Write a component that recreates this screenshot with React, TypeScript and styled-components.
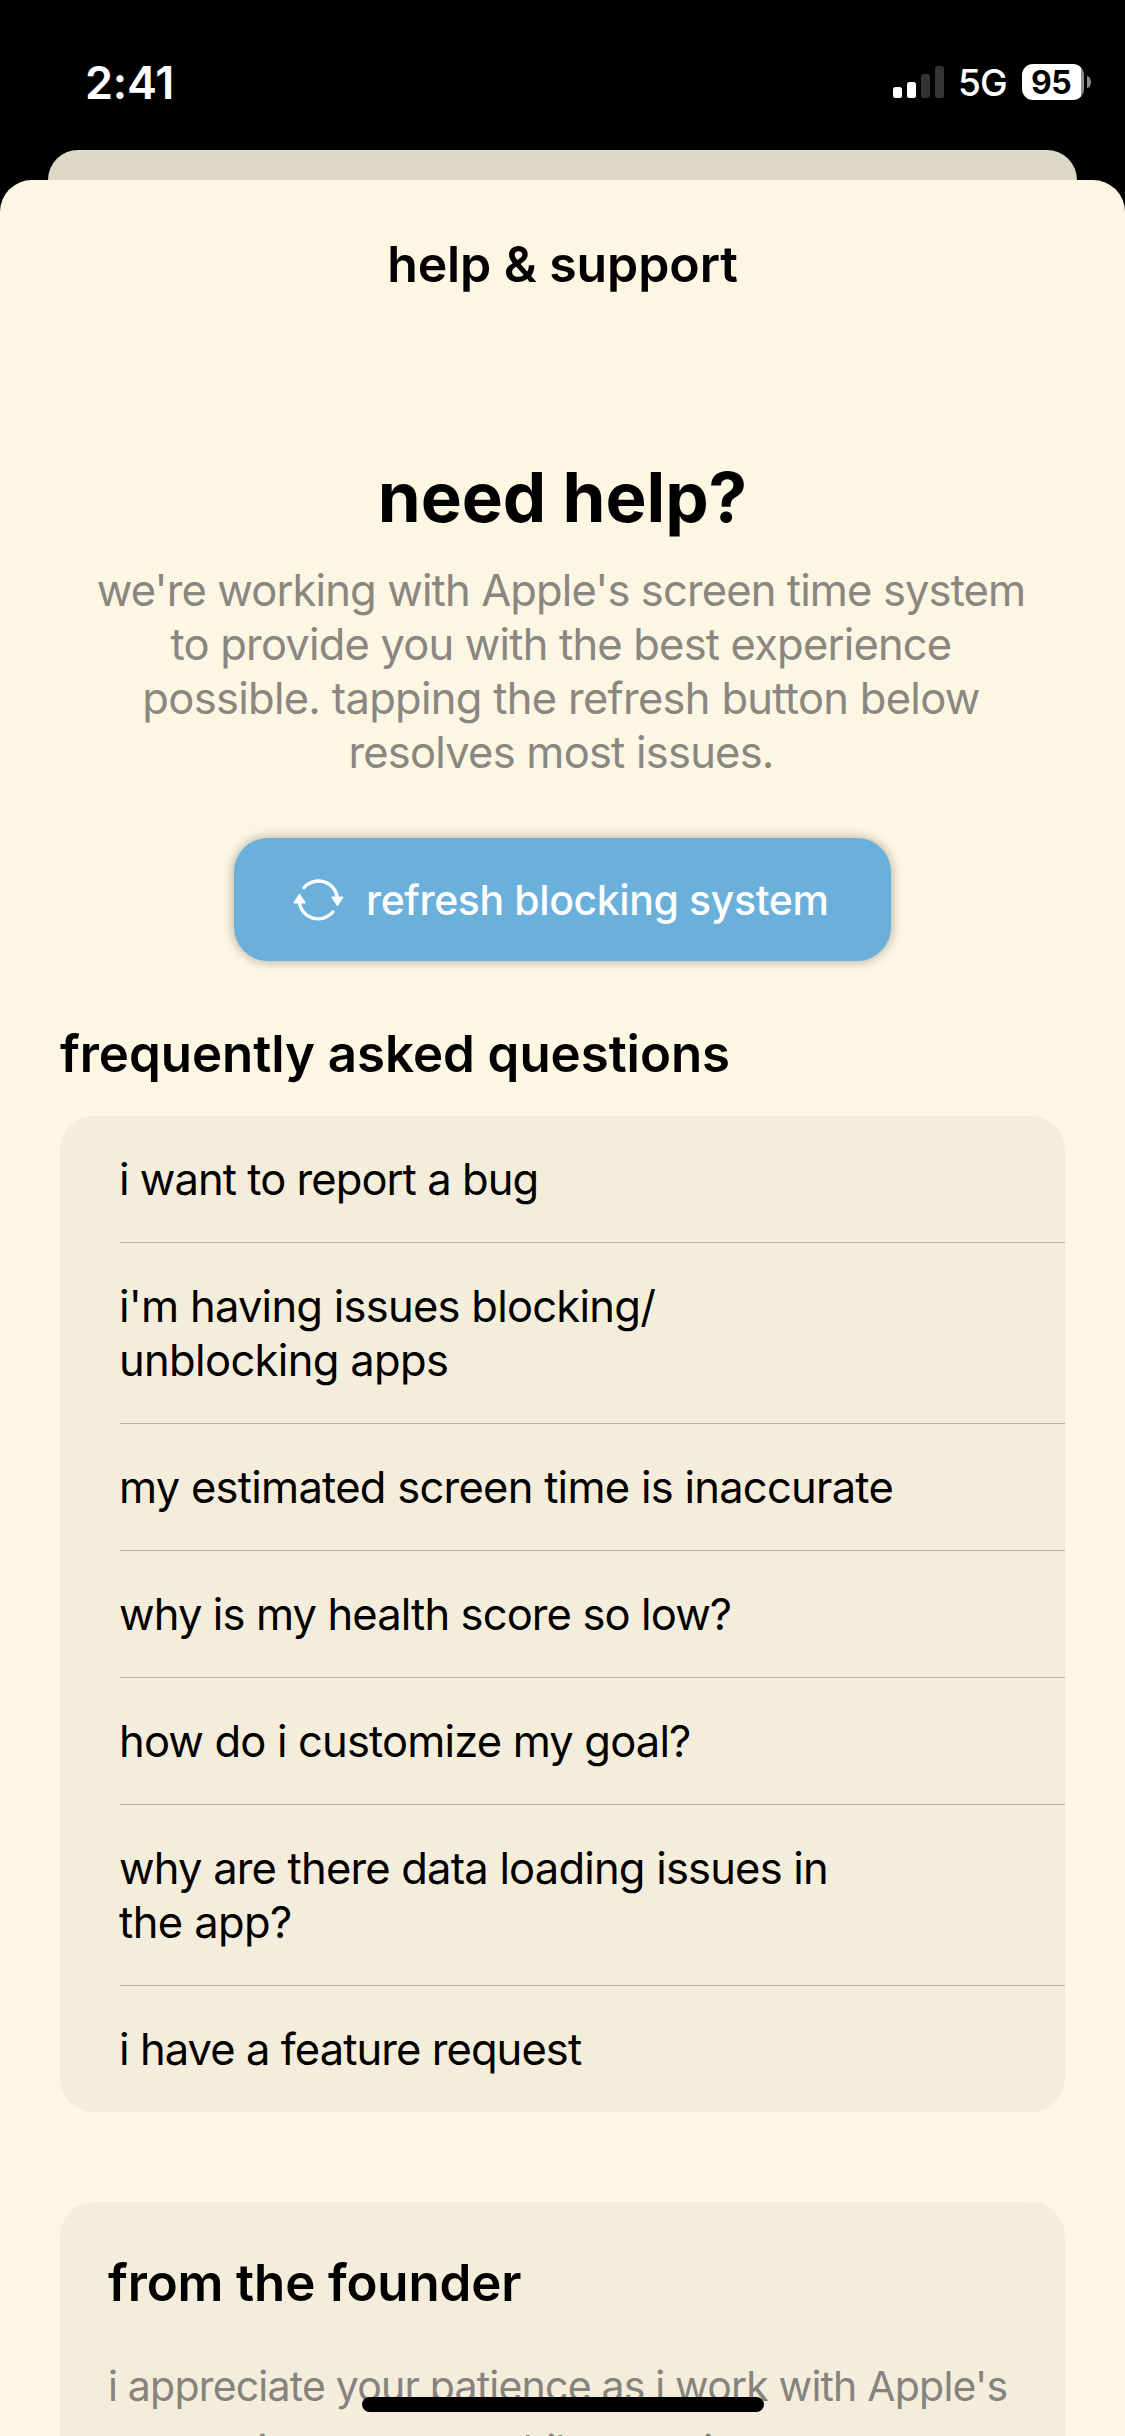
import React from "react";
import styled, { createGlobalStyle } from "styled-components";

const GlobalStyle = createGlobalStyle`
  *, *::before, *::after { box-sizing: border-box; }
  html, body { margin: 0; padding: 0; background: #000; }
  body { font-family: "Inter", "Liberation Sans", sans-serif; overflow: hidden; }
  h1, h2, h3, p, ul { margin: 0; padding: 0; font-weight: inherit; }
`;

const Screen = styled.div`
  position: relative;
  width: 1125px;
  height: 2436px;
  display: flex;
  flex-direction: column;
  overflow: hidden;
  background: #000;
  color: #000;
`;

const StatusBar = styled.header`
  height: 150px;
  flex: none;
  display: flex;
  justify-content: space-between;
  align-items: center;
  padding: 14px 34px 0 85px;
  color: #fff;
`;

const Time = styled.span`
  font-size: 45px;
  font-weight: 600;
  letter-spacing: -0.25px;
`;

const StatusIcons = styled.div`
  display: flex;
  align-items: center;
`;

const Signal = styled.div`
  display: flex;
  align-items: flex-end;
  gap: 5px;
  height: 32px;
`;

const SignalBar = styled.i<{ $height: number; $active: boolean }>`
  width: 9px;
  height: ${(p) => p.$height}px;
  border-radius: 2.5px;
  background: ${(p) => (p.$active ? "#fff" : "#333")};
`;

const Network = styled.span`
  width: 62px;
  padding-left: 14px;
  box-sizing: content-box;
  padding-top: 1px;
  font-size: 37px;
  font-weight: 500;
  letter-spacing: -0.9px;
`;

const Battery = styled.div`
  display: flex;
  align-items: center;
  gap: 3px;
  margin-left: 2px;
`;

const BatteryBody = styled.div`
  width: 62px;
  height: 36px;
  border-radius: 11px;
  display: flex;
  align-items: center;
  padding: 1px 0 0 9px;
  background: linear-gradient(90deg, #fff 59px, #8c8c8c 59px);
  color: #000;
  font-size: 32px;
  font-weight: 700;
  letter-spacing: -0.5px;
  line-height: 36px;
`;

const BatteryCap = styled.div`
  width: 4px;
  height: 12px;
  border-radius: 0 4px 4px 0 / 0 6px 6px 0;
  background: #8c8c8c;
`;

const BackSheet = styled.div`
  flex: none;
  height: 30px;
  margin: 0 48px;
  border-radius: 30px 30px 0 0;
  background: #ded8c6;
`;

const Sheet = styled.main`
  flex: 1;
  min-height: 0;
  border-radius: 32px 32px 0 0;
  background: #fdf6e3;
  padding: 0 60px;
  overflow: hidden;
`;

const NavTitle = styled.h1`
  padding: 54px 0 161px;
  text-align: center;
  font-size: 50px;
  font-weight: 600;
  line-height: 60px;
  letter-spacing: -0.1px;
`;

const Intro = styled.section`
  display: flex;
  flex-direction: column;
  align-items: center;
  text-align: center;
`;

const IntroTitle = styled.h2`
  font-size: 69px;
  font-weight: 700;
  line-height: 84px;
  letter-spacing: -0.05px;
`;

const IntroText = styled.p`
  margin: 24px 3px 59px 0;
  font-size: 43.5px;
  line-height: 54px;
  color: #8a8680;
`;

const Line = styled.span<{ $tracking: number }>`
  display: block;
  white-space: nowrap;
  letter-spacing: ${(p) => p.$tracking}px;
`;

const RefreshButton = styled.button`
  width: 657px;
  height: 123px;
  display: flex;
  align-items: center;
  gap: 22px;
  padding: 0 0 0 58px;
  border: 0;
  border-radius: 34px;
  background: #6ab0db;
  box-shadow: 0 0 12px rgba(0, 0, 0, 0.33);
  color: #fff;
  font-family: inherit;
  font-size: 41px;
  font-weight: 500;
  letter-spacing: -0.4px;
  white-space: nowrap;
`;

const SectionTitle = styled.h2`
  font-size: 51px;
  font-weight: 600;
  line-height: 60px;
  letter-spacing: -0.04px;
`;

const FaqSection = styled.section`
  margin-top: 63px;
`;

const FaqList = styled.ul`
  margin-top: 32px;
  padding-left: 60px;
  border-radius: 34px;
  background: #f4eddb;
  list-style: none;
`;

const FaqRow = styled.li`
  padding: 36px 0;
  font-size: 43.5px;
  line-height: 54px;
  text-indent: -1px;
  & + & {
    border-top: 1px solid #bab4a8;
  }
`;

const FounderCard = styled.section`
  margin-top: 90px;
  padding: 51px 48px;
  border-radius: 34px;
  background: #f4eddb;
`;

const FounderTitle = styled(SectionTitle)`
  letter-spacing: -0.13px;
`;

const FounderText = styled.p`
  margin-top: 41px;
  font-size: 41px;
  line-height: 64px;
  color: #86837e;
`;

const HomeIndicator = styled.div`
  position: absolute;
  left: 362px;
  bottom: 24px;
  width: 402px;
  height: 15px;
  border-radius: 8px;
  background: #000;
`;

const RefreshIcon = () => (
  <svg width="52" height="44" viewBox="0 0 52 44" fill="none">
    <path
      d="M11.8 9.8A19.2 19.2 0 0 1 45.5 20M40.9 34A19.2 19.2 0 0 1 7.1 23"
      stroke="#fff"
      strokeWidth="3.3"
      strokeLinecap="round"
    />
    <path
      d="M40.2 19.2H50.6L45.6 27.2ZM2.2 24.6H12.8L7.5 16.6Z"
      fill="#fff"
      stroke="#fff"
      strokeWidth="1.6"
      strokeLinejoin="round"
    />
  </svg>
);

type TextLine = [text: string, tracking: number];

const signal = [
  { height: 11, active: true },
  { height: 16, active: true },
  { height: 24, active: false },
  { height: 32, active: false },
];

const intro: TextLine[] = [
  ["we're working with Apple's screen time system", -0.88],
  ["to provide you with the best experience", -0.82],
  ["possible. tapping the refresh button below", -0.71],
  ["resolves most issues.", -0.78],
];

const questions: TextLine[][] = [
  [["i want to report a bug", -0.95]],
  [
    ["i'm having issues blocking/", -0.75],
    ["unblocking apps", -0.66],
  ],
  [["my estimated screen time is inaccurate", -0.74]],
  [["why is my health score so low?", -0.88]],
  [["how do i customize my goal?", -0.84]],
  [
    ["why are there data loading issues in", -0.81],
    ["the app?", -0.6],
  ],
  [["i have a feature request", -0.92]],
];

const founderNote: TextLine[] = [
  ["i appreciate your patience as i work with Apple's", -0.8],
  ["screen time system, while ensuring", -0.92],
];

const Lines = ({ lines }: { lines: TextLine[] }) => (
  <>
    {lines.map(([text, tracking]) => (
      <Line key={text} $tracking={tracking}>
        {text}
      </Line>
    ))}
  </>
);

export default function App() {
  return (
    <Screen>
      <GlobalStyle />
      <StatusBar>
        <Time>2:41</Time>
        <StatusIcons>
          <Signal>
            {signal.map((bar) => (
              <SignalBar key={bar.height} $height={bar.height} $active={bar.active} />
            ))}
          </Signal>
          <Network>5G</Network>
          <Battery>
            <BatteryBody>95</BatteryBody>
            <BatteryCap />
          </Battery>
        </StatusIcons>
      </StatusBar>
      <BackSheet />
      <Sheet>
        <NavTitle>help &amp; support</NavTitle>
        <Intro>
          <IntroTitle>need help?</IntroTitle>
          <IntroText>
            <Lines lines={intro} />
          </IntroText>
          <RefreshButton>
            <RefreshIcon />
            refresh blocking system
          </RefreshButton>
        </Intro>
        <FaqSection>
          <SectionTitle>frequently asked questions</SectionTitle>
          <FaqList>
            {questions.map((lines) => (
              <FaqRow key={lines[0][0]}>
                <Lines lines={lines} />
              </FaqRow>
            ))}
          </FaqList>
        </FaqSection>
        <FounderCard>
          <FounderTitle>from the founder</FounderTitle>
          <FounderText>
            <Lines lines={founderNote} />
          </FounderText>
        </FounderCard>
      </Sheet>
      <HomeIndicator />
    </Screen>
  );
}
